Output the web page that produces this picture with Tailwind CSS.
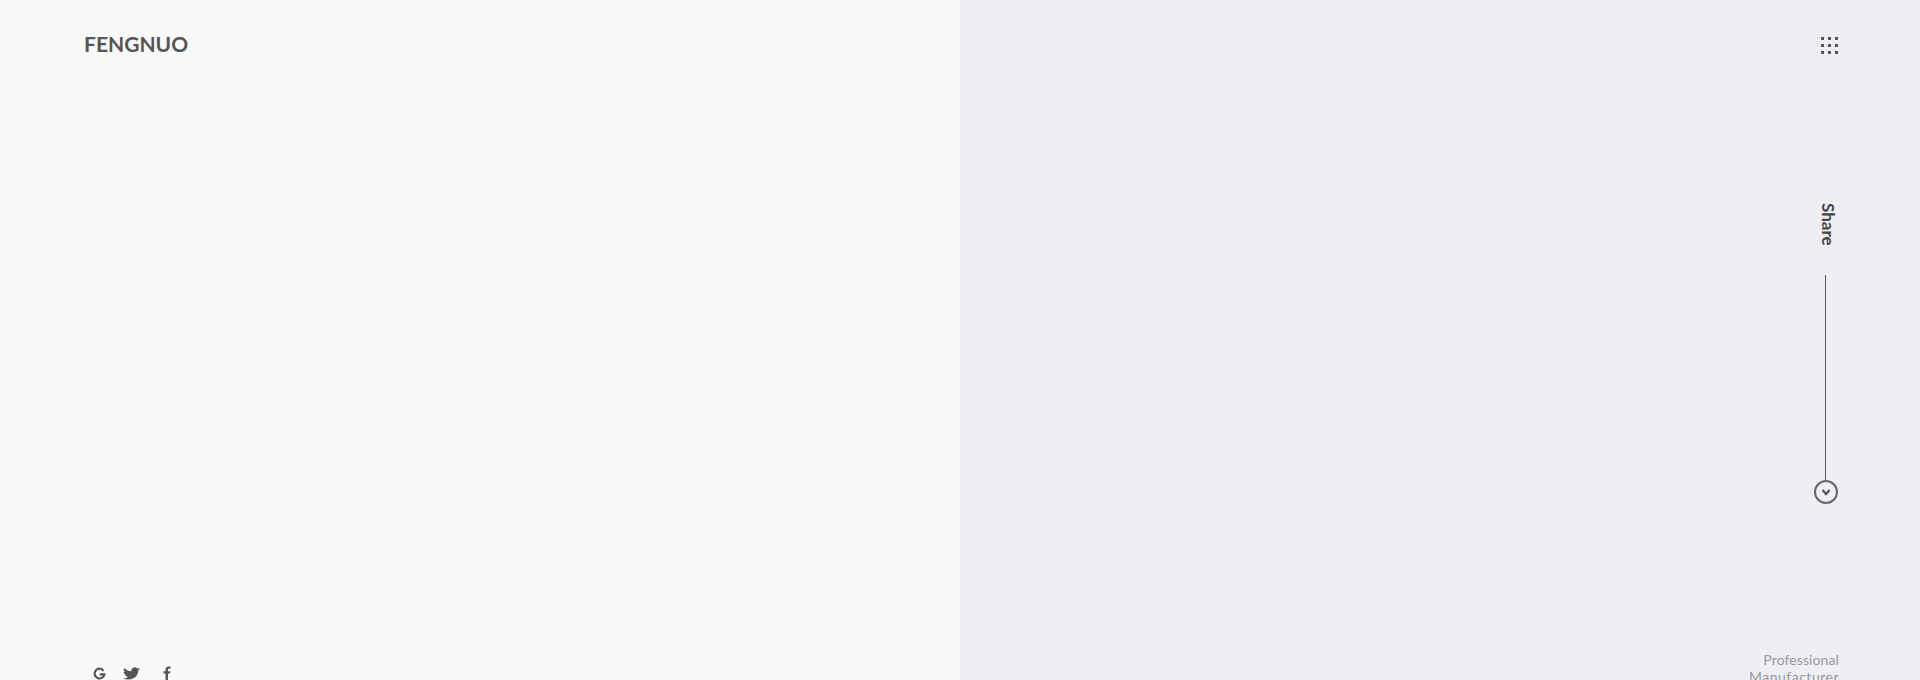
<!DOCTYPE html>
<html lang="en">
<head>
<meta charset="utf-8">
<title>Fengnuo</title>
<script src="https://cdn.jsdelivr.net/npm/@tailwindcss/browser@4"></script>
</head>
<body class="overflow-hidden">
<div class="grid grid-cols-2 h-[680px] overflow-hidden font-['Lato',sans-serif]">
  <div class="bg-[#f9f9f9] h-[680px] pl-[84px] flex flex-col justify-between">
    <div class="pt-[30px] text-[21px] leading-[28px] font-bold text-[#555555]">FENGNUO</div>
    <div class="flex items-center h-[16px] mb-[-1px] pl-[9px] gap-[17px] text-[#555555]">
      <svg class="w-[13px] h-[13px]" viewBox="0 0 24 24" fill="none" stroke="currentColor" stroke-width="4"><path d="M19.5 7A9 9 0 1 0 21 13.500H12.500"/></svg>
      <svg class="w-[17px] h-[15px]" viewBox="0 0 24 24" preserveAspectRatio="none" fill="currentColor"><path d="M23.950 4.570a10 10 0 0 1-2.820.770 4.960 4.960 0 0 0 2.160-2.720c-.950.550-2 .960-3.130 1.190a4.920 4.920 0 0 0-8.380 4.480C7.690 8.100 4.070 6.130 1.640 3.160a4.820 4.820 0 0 0-.660 2.480c0 1.710.870 3.210 2.190 4.100a4.900 4.900 0 0 1-2.230-.620v.060a4.920 4.920 0 0 0 3.950 4.830 5 5 0 0 1-2.210.080 4.940 4.940 0 0 0 4.600 3.420A9.870 9.870 0 0 1 0 19.540a14 14 0 0 0 7.560 2.210c9.050 0 14-7.500 14-13.980 0-.210 0-.420-.020-.630a9.940 9.940 0 0 0 2.410-2.570z"/></svg>
      <svg class="w-[14px] h-[14px] ml-[3px]" viewBox="0 0 24 24" fill="currentColor"><path d="M9.500 24V13H6V9h3.500V6.500C9.500 3 11.600 1 14.800 1c1.500 0 2.700.100 3.200.200v3.700h-2.200c-1.700 0-2.100.800-2.100 2V9h4.100l-.600 4h-3.500v11z"/></svg>
    </div>
  </div>
  <div class="bg-[#efeff3] h-[680px] pr-[81px] flex flex-col items-end justify-between">
    <div class="flex flex-col items-end">
      <div class="pt-[37px] mr-[1px] grid grid-cols-3 gap-[4px] w-[17px]">
        <span class="w-[3px] h-[3px] bg-[#555555]"></span><span class="w-[3px] h-[3px] bg-[#555555]"></span><span class="w-[3px] h-[3px] bg-[#555555]"></span>
        <span class="w-[3px] h-[3px] bg-[#555555]"></span><span class="w-[3px] h-[3px] bg-[#555555]"></span><span class="w-[3px] h-[3px] bg-[#555555]"></span>
        <span class="w-[3px] h-[3px] bg-[#555555]"></span><span class="w-[3px] h-[3px] bg-[#555555]"></span><span class="w-[3px] h-[3px] bg-[#555555]"></span>
      </div>
      <div class="mt-[149px] mr-[1px] flex flex-col items-center w-[24px]">
        <div class="[writing-mode:vertical-rl] ml-[3px] text-[17px] leading-[20px] font-bold text-[#444444]">Share</div>
        <div class="mt-[29px] mr-[1px] w-px h-[205px] bg-[#555555]"></div>
        <div class="w-[24px] h-[24px] rounded-full border-2 border-[#666666] flex items-center justify-center">
          <svg class="w-[10px] h-[10px]" viewBox="0 0 10 10" fill="none" stroke="#555555" stroke-width="2.200"><path d="M1.500 3 5 7 8.500 3"/></svg>
        </div>
      </div>
    </div>
    <div class="text-right text-[14px] leading-[17px] font-normal text-[#98989e] mb-[-5px]"><div class="tracking-[0.1px]">Professional</div><div class="tracking-[0.5px]">Manufacturer</div></div>
  </div>
</div>
</body>
</html>
